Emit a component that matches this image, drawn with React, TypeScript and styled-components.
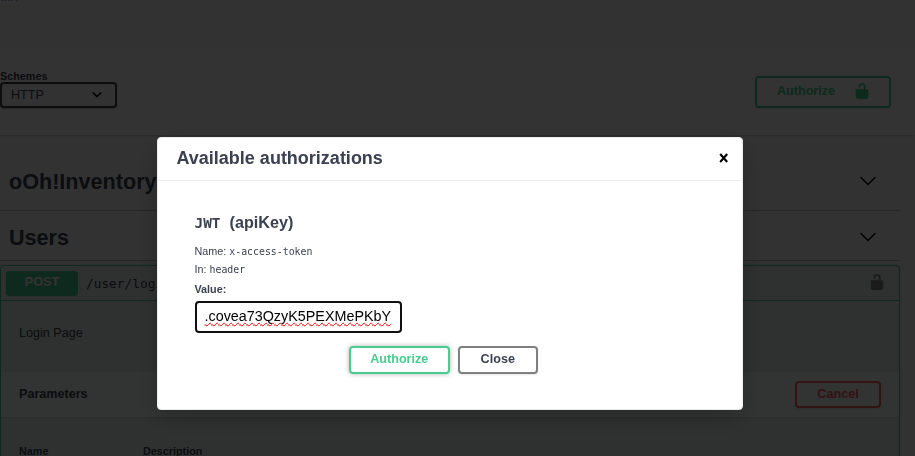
import React from 'react';
import styled, { createGlobalStyle } from 'styled-components';

const sans = '"Liberation Sans", Arial, sans-serif';
const mono = '"DejaVu Sans Mono", monospace';

const GlobalStyle = createGlobalStyle`
  *, *::before, *::after { box-sizing: border-box; }
  body { margin: 0; background: #fafafa; color: #3b4151; font-family: ${sans}; overflow: hidden; }
  h2, h3, h4, p { margin: 0; }
`;

const Page = styled.div`
  height: 456px;
  overflow: hidden;
  background: #fafafa;
`;

const Info = styled.header`
  height: 49px;
  overflow: hidden;
`;

const InfoLink = styled.a`
  display: block;
  margin: -9px 0 0 1px;
  font-size: 10.8px;
  line-height: 12px;
  color: #4990e2;
`;

const SchemeBar = styled.section`
  height: 86px;
  padding: 21px 24px 0 0;
  display: flex;
  justify-content: space-between;
  align-items: flex-start;
  background: #fff;
  box-shadow: 0 1px 2px rgba(0, 0, 0, 0.15);
`;

const SchemeLabel = styled.label`
  display: flex;
  flex-direction: column;
  font-size: 10.8px;
  font-weight: 700;
  line-height: 12px;
`;

const SchemeSelect = styled.span`
  width: 117px;
  height: 26px;
  padding: 0 13px 1px 9px;
  display: flex;
  align-items: center;
  justify-content: space-between;
  border: 2px solid #41444e;
  border-radius: 4px;
  background: #f7f7f7;
  box-shadow: 0 1px 2px rgba(0, 0, 0, 0.25);
  font-size: 12.6px;
  font-weight: 400;
`;

const Button = styled.button<{ $tone: string; $text?: string; $width: number; $height: number; $glow?: boolean }>`
  width: ${p => p.$width}px;
  height: ${p => p.$height}px;
  padding: 0 0 2px;
  display: flex;
  align-items: center;
  justify-content: center;
  border: 2px solid ${p => p.$tone};
  border-radius: 4px;
  background: transparent;
  box-shadow: ${p => (p.$glow ? '0 0 5px rgba(0, 0, 0, 0.3)' : '0 1px 2px rgba(0, 0, 0, 0.1)')};
  color: ${p => p.$text ?? p.$tone};
  font: 700 12.6px ${sans};
`;

const AuthorizeButton = styled(Button)`
  margin-top: 6px;
  padding: 0 18px 2px 20px;
  justify-content: space-between;
  span { margin-bottom: 1px; }
`;

const TagRow = styled.div<{ $height: number; $pad: number }>`
  width: 900px;
  height: ${p => p.$height}px;
  padding: ${p => p.$pad}px 23px 0 9px;
  display: flex;
  align-items: flex-start;
  justify-content: space-between;
  border-bottom: 1px solid rgba(59, 65, 81, 0.3);
  h3 { font-size: 21.6px; line-height: 26px; }
  svg { margin-top: 7px; }
`;

const Operation = styled.article`
  width: 900px;
  height: 220px;
  margin-top: 4px;
  border: 1px solid #49cc90;
  border-radius: 4px;
  background: rgba(73, 204, 144, 0.1);
  box-shadow: 0 0 3px rgba(0, 0, 0, 0.19);
`;

const Summary = styled.div`
  height: 35px;
  padding: 0 13px 0 5px;
  display: flex;
  align-items: center;
  border-bottom: 1px solid #49cc90;
  svg { margin: 0 0 2px auto; }
`;

const Method = styled.span`
  width: 72px;
  height: 25px;
  margin-right: 8px;
  border-radius: 3px;
  background: #49cc90;
  color: #fff;
  text-align: center;
  font-size: 12.6px;
  font-weight: 700;
  line-height: 23px;
  text-shadow: 0 1px 0 rgba(0, 0, 0, 0.1);
`;

const Path = styled.code`
  font: 500 12.8px ${mono};
`;

const Description = styled.p`
  height: 71px;
  padding: 24px 18px 0;
  font-size: 12.6px;
  line-height: 16px;
`;

const ParametersHeader = styled.div`
  height: 45px;
  padding: 0 18px;
  display: flex;
  align-items: center;
  justify-content: space-between;
  background: rgba(255, 255, 255, 0.8);
  box-shadow: 0 1px 2px rgba(0, 0, 0, 0.1);
  h4 { font-size: 12.6px; padding-bottom: 2px; }
`;

const ColumnHeads = styled.div`
  padding: 28px 18px 0;
  display: grid;
  grid-template-columns: 124px 1fr;
  font-size: 10.8px;
  font-weight: 700;
  line-height: 12px;
`;

const Backdrop = styled.div`
  position: fixed;
  inset: 0;
  padding: 137px 0 0 157px;
  background: rgba(0, 0, 0, 0.8);
`;

const Dialog = styled.section`
  width: 586px;
  height: 273px;
  border: 1px solid #ebebeb;
  border-radius: 4px;
  background: #fff;
  box-shadow: 0 9px 27px rgba(0, 0, 0, 0.2);
`;

const DialogHeader = styled.header`
  height: 43px;
  padding: 0 12px 2px 18.5px;
  display: flex;
  align-items: center;
  justify-content: space-between;
  border-bottom: 1px solid #ebebeb;
  h3 { font-size: 18px; font-weight: 700; }
`;

const DialogBody = styled.div`
  padding: 31px 37px 0 36.5px;
  h4 { font-size: 16.2px; line-height: 20px; margin-bottom: 10px; white-space: pre; }
  h4 code { font: 700 14.4px ${mono}; }
`;

const Line = styled.p<{ $bold?: boolean }>`
  font-size: 10.8px;
  font-weight: ${p => (p.$bold ? 700 : 400)};
  line-height: 18px;
  margin-top: ${p => (p.$bold ? 2 : 0)}px;
  code { font: 400 9.87px ${mono}; }
`;

const TokenField = styled.div`
  width: 207px;
  height: 32px;
  margin-top: 3px;
  padding: 4px 8px 0;
  border: 2px solid #101010;
  border-radius: 4px;
  color: #000;
  font-size: 14.35px;
  line-height: 18px;
  span { text-decoration: underline wavy #f00 1px; text-decoration-skip-ink: none; }
`;

const Actions = styled.div`
  margin: 13px 13px 0 0;
  display: flex;
  justify-content: center;
  gap: 8px;
`;

const Unlocked = ({ color }: { color: string }) => (
  <svg width="18" height="18" viewBox="0 0 20 20" fill={color}>
    <path d="M15.8 8H14V5.6C14 2.703 12.665 1 10 1 7.334 1 6 2.703 6 5.6V6h2v-.801C8 3.754 8.797 3 10 3c1.203 0 2 .754 2 2.199V8H4c-.553 0-1 .646-1 1.199V17c0 .549.428 1.139.951 1.307l1.197.387C5.672 18.861 6.55 19 7.1 19h5.8c.549 0 1.428-.139 1.951-.307l1.196-.387c.524-.167.953-.757.953-1.306V9.199C17 8.646 16.352 8 15.8 8z" />
  </svg>
);

const Cross = () => (
  <svg width="12" height="12" viewBox="0 0 12 12" fill="none" stroke="#000" strokeWidth="2.1">
    <path d="M2.2 2l7 8M9.2 2l-7 8" />
  </svg>
);

const Arrow = () => (
  <svg width="18" height="10" viewBox="0 0 18 10" fill="none" stroke="#000" strokeWidth="1.4">
    <path d="M1.5 1l7.5 7.5L16.5 1" />
  </svg>
);

const SelectArrow = () => (
  <svg width="10" height="6" viewBox="0 0 10 6" fill="none" stroke="#000" strokeWidth="1.6" strokeLinecap="round">
    <path d="M1.3 1L5 4.6 8.7 1" />
  </svg>
);

export default function App() {
  return (
    <>
      <GlobalStyle />
      <Page>
        <Info><InfoLink>MIT</InfoLink></Info>
        <SchemeBar>
          <SchemeLabel>
            Schemes
            <SchemeSelect>HTTP<SelectArrow /></SchemeSelect>
          </SchemeLabel>
          <AuthorizeButton $tone="#49cc90" $width={136} $height={32}>
            <span>Authorize</span>
            <Unlocked color="#49cc90" />
          </AuthorizeButton>
        </SchemeBar>
        <TagRow $height={76} $pad={34}><h3>oOh!Inventory</h3><Arrow /></TagRow>
        <TagRow $height={50} $pad={14}><h3>Users</h3><Arrow /></TagRow>
        <Operation>
          <Summary>
            <Method>POST</Method>
            <Path>/user/login</Path>
            <Unlocked color="#888" />
          </Summary>
          <Description>Login Page</Description>
          <ParametersHeader>
            <h4>Parameters</h4>
            <Button $tone="#ff6060" $width={86} $height={27}>Cancel</Button>
          </ParametersHeader>
          <ColumnHeads><span>Name</span><span>Description</span></ColumnHeads>
        </Operation>
      </Page>
      <Backdrop>
        <Dialog role="dialog">
          <DialogHeader><h3>Available authorizations</h3><Cross /></DialogHeader>
          <DialogBody>
            <h4><code>JWT</code>{'  '}(apiKey)</h4>
            <Line>Name: <code>x-access-token</code></Line>
            <Line>In: <code>header</code></Line>
            <Line $bold>Value:</Line>
            <TokenField><span>.covea73QzyK5PEXMePKbY</span></TokenField>
            <Actions>
              <Button $tone="#49cc90" $width={101} $height={28} $glow>Authorize</Button>
              <Button $tone="#808080" $text="#3b4151" $width={80} $height={28}>Close</Button>
            </Actions>
          </DialogBody>
        </Dialog>
      </Backdrop>
    </>
  );
}
